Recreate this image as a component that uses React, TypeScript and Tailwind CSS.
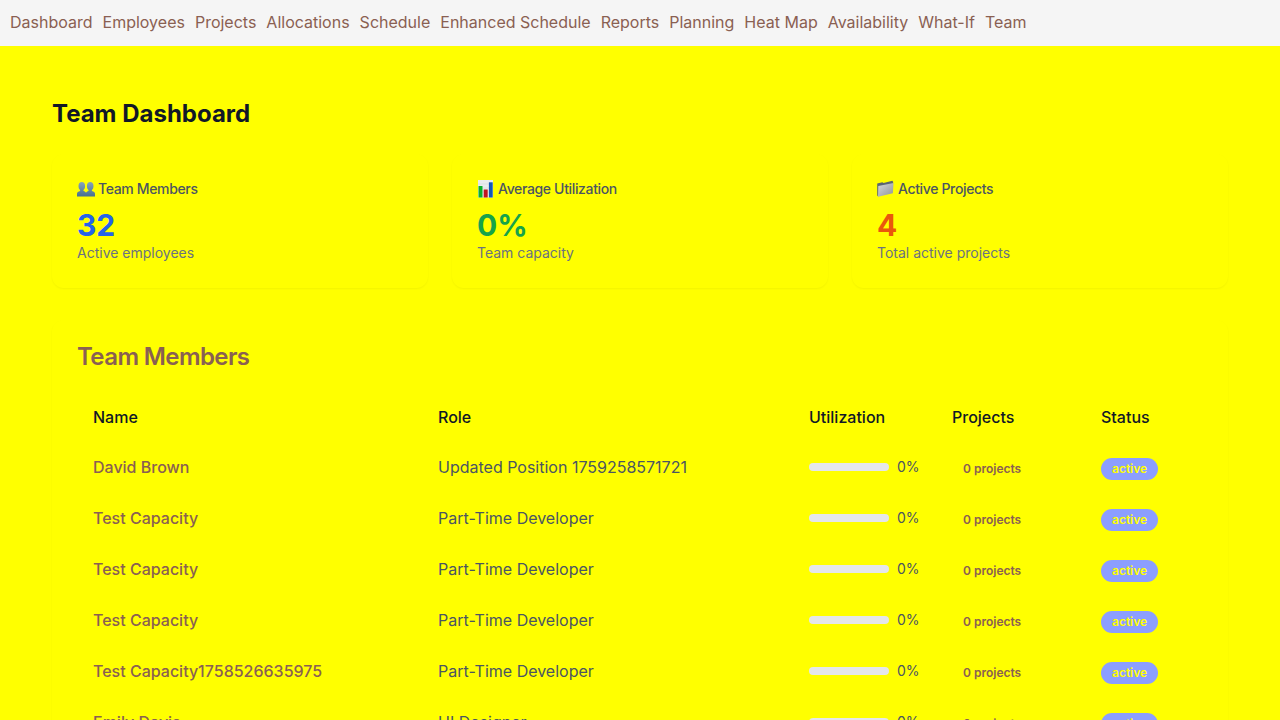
import React from "react";

const links = ["Dashboard", "Employees", "Projects", "Allocations", "Schedule", "Enhanced Schedule", "Reports", "Planning", "Heat Map", "Availability", "What-If", "Team"];

function PeopleIcon() {
  return (
    <svg aria-hidden="true" viewBox="0 0 18 18" className="inline-block size-[18px] align-[-4px]">
      <defs>
        <linearGradient id="bust" x1="0" y1="0" x2="0" y2="1">
          <stop offset="0" stopColor="#86a3bb" />
          <stop offset="1" stopColor="#47708f" />
        </linearGradient>
      </defs>
      <path fill="url(#bust)" d="M4.800 2c2 0 3.300 1.500 3.300 3.900 0 1.800-.6 3.200-1.600 4v1.200c1.200.4 2.200.9 2.500 1.700.3-.8 1.300-1.300 2.500-1.700V9.900c-1-.8-1.600-2.200-1.600-4C9.900 3.500 11.200 2 13.200 2s3.300 1.500 3.300 3.900c0 1.800-.6 3.200-1.600 4v1.200c1.800.6 3.100 1.300 3.100 2.700v2.800H0v-2.800c0-1.400 1.300-2.100 3.100-2.700V9.900c-1-.8-1.600-2.200-1.600-4C1.500 3.500 2.800 2 4.800 2Z" />
    </svg>
  );
}

function ChartIcon() {
  return (
    <svg aria-hidden="true" viewBox="0 0 18 18" className="inline-block size-[18px] align-[-3px]">
      <path fill="#e9ebee" d="M1 0h15v17.500h-15z" />
      <path stroke="#cfd4da" strokeWidth=".5" d="M1 4h15M1 8h15M1 12h15" />
      <path fill="#0cb02c" d="M1.500 6h4v11.500h-4z" />
      <path fill="#c01420" d="M6.700 9.500h4v8h-4z" />
      <path fill="#1457b8" d="M11.900 2.300h3.800v15.200h-3.800z" />
    </svg>
  );
}

function FolderIcon() {
  return (
    <svg aria-hidden="true" viewBox="0 0 18 18" className="inline-block size-[18px] align-[-3px]">
      <defs>
        <linearGradient id="folder" x1="0" y1="0" x2="1" y2="1">
          <stop offset="0" stopColor="#d6d8db" />
          <stop offset="1" stopColor="#8f9398" />
        </linearGradient>
      </defs>
      <path fill="#5c6672" d="M.2 3.500 5.300 2.200l1.300.9 8.700-2.300.8 1v2L1.200 16.500.2 15.500Z" />
      <path fill="url(#folder)" d="M1.300 6 16.500 3 15.900 13.300 1 16.800Z" />
    </svg>
  );
}

const stats = [
  { Icon: PeopleIcon, title: "Team Members", value: "32", note: "Active employees", color: "text-[#2563eb]" },
  { Icon: ChartIcon, title: "Average Utilization", value: "0%", note: "Team capacity", color: "text-[#16a34a]" },
  { Icon: FolderIcon, title: "Active Projects", value: "4", note: "Total active projects", color: "text-[#ea580c]" },
];

const members = [
  { name: "David Brown", role: "Updated Position 1759258571721" },
  { name: "Test Capacity", role: "Part-Time Developer" },
  { name: "Test Capacity", role: "Part-Time Developer" },
  { name: "Test Capacity", role: "Part-Time Developer" },
  { name: "Test Capacity1758526635975", role: "Part-Time Developer" },
  { name: "Emily Davis", role: "UI Designer" },
];

export default function App() {
  return (
    <div className="h-screen overflow-hidden bg-[#ffff00] font-['Inter',sans-serif] text-[#8a6052]">
      <nav className="flex gap-[10px] bg-[#f5f5f5] px-[10px] pt-[10px] pb-3">
        {links.map((l) => (
          <a key={l} href="#" className="whitespace-nowrap">{l}</a>
        ))}
      </nav>
      <main className="px-[52px] pt-[52px]">
        <h1 className="mb-6 text-2xl font-bold text-[#111827]">Team Dashboard</h1>
        <section className="mb-8 grid grid-cols-3 gap-6">
          {stats.map((s) => (
            <div key={s.title} className="rounded-xl border border-transparent p-6 shadow-[0_1px_2px_0_rgb(0_0_0/0.05)]">
              <h2 className="mb-2 flex h-5 items-center gap-[3px] text-sm font-medium tracking-tight text-[#4b5563]"><s.Icon />{s.title}</h2>
              <p className={`text-3xl font-bold ${s.color}`}>{s.value}</p>
              <p className="text-sm text-[#6b7280]">{s.note}</p>
            </div>
          ))}
        </section>
        <section className="rounded-xl border border-transparent p-6 shadow-[0_1px_2px_0_rgb(0_0_0/0.05)]">
          <h2 className="mb-6 text-2xl leading-none font-semibold tracking-tight">Team Members</h2>
          <table className="w-full table-fixed text-left">
            <thead>
              <tr className="border-b border-transparent text-[#111827]">
                <th className="w-[345px] px-4 py-3 font-medium">Name</th>
                <th className="px-4 py-3 font-medium">Role</th>
                <th className="w-[143px] px-4 py-3 font-medium">Utilization</th>
                <th className="w-[149px] px-4 py-3 font-medium">Projects</th>
                <th className="w-[118px] px-4 py-3 font-medium">Status</th>
              </tr>
            </thead>
            <tbody>
              {members.map((m, i) => (
                <tr key={i} className="border-b border-transparent">
                  <td className="px-4 py-3 font-medium">{m.name}</td>
                  <td className="px-4 py-3 text-[#4b5563]">{m.role}</td>
                  <td className="px-4 py-3">
                    <div className="flex items-center gap-2">
                      <div className="h-2 w-20 shrink-0 rounded-full bg-[#e5e7eb]" />
                      <span className="text-sm text-[#4b5563]">0%</span>
                    </div>
                  </td>
                  <td className="px-4 pt-4 pb-3">
                    <span className="flex w-fit rounded-full border border-transparent px-2.5 py-0.5 text-xs font-semibold">0 projects</span>
                  </td>
                  <td className="px-4 pt-4 pb-3">
                    <span className="flex w-fit rounded-full border border-transparent bg-[#8c9eff] px-2.5 py-0.5 text-xs font-semibold text-[#ffff00]">active</span>
                  </td>
                </tr>
              ))}
            </tbody>
          </table>
        </section>
      </main>
    </div>
  );
}
